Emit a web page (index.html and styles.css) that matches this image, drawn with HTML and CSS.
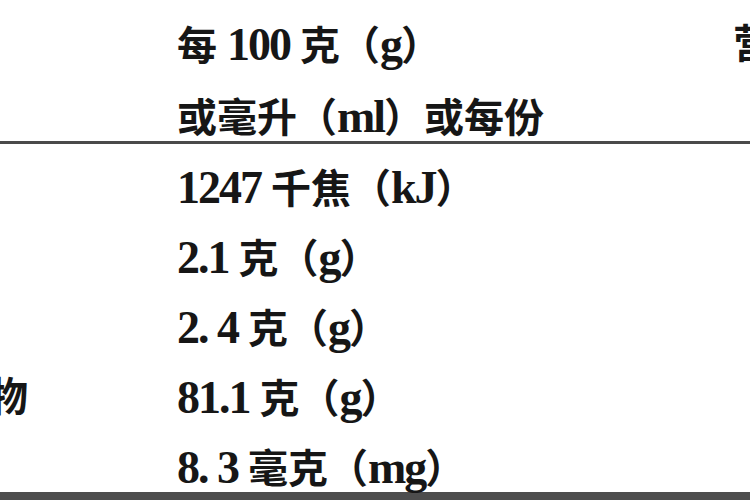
FILE: index.html
```html
<!DOCTYPE html>
<html lang="zh-CN">
<head>
<meta charset="utf-8">
<title>营养成分表</title>
<link rel="stylesheet" href="styles.css">
</head>
<body>
<div class="tbl">
  <div class="row head">
    <div class="cell"><div class="ln">项目</div><div class="ln"></div></div>
    <div class="cell"><div class="ln">每 <span class="n">100</span> 克（<span class="n">g</span>）</div><div class="ln">或毫升（<span class="n">ml</span>）或每份</div></div>
    <div class="cell nrv"><div class="ln">营养素参考值%</div><div class="ln"></div></div>
  </div>
  <div class="body">
    <div class="row"><div class="cell">能量</div><div class="cell"><span class="n">1247</span> 千焦（<span class="n">kJ</span>）</div><div class="cell nrv"><span class="v">15%</span></div></div>
    <div class="row"><div class="cell">蛋白质</div><div class="cell"><span class="n">2.1</span> 克（<span class="n">g</span>）</div><div class="cell nrv"><span class="v">4%</span></div></div>
    <div class="row"><div class="cell">脂肪</div><div class="cell"><span class="n">2. 4</span> 克（<span class="n">g</span>）</div><div class="cell nrv"><span class="v">4%</span></div></div>
    <div class="row"><div class="cell">碳水化合物</div><div class="cell"><span class="n">81.1</span> 克（<span class="n">g</span>）</div><div class="cell nrv"><span class="v">27%</span></div></div>
    <div class="row"><div class="cell">钠</div><div class="cell"><span class="n">8. 3</span> 毫克（<span class="n">mg</span>）</div><div class="cell nrv"><span class="v">0%</span></div></div>
  </div>
</div>
</body>
</html>
```

FILE: styles.css
```css
html, body {
  margin: 0;
  padding: 0;
  background: #ffffff;
}
body {
  width: 750px;
  height: 500px;
  overflow: hidden;
}
.tbl {
  margin-left: -172px;
  width: 1100px;
  font-family: "Liberation Serif", "Noto Sans CJK SC", serif;
  font-weight: bold;
  font-size: 40px;
  color: #161616;
}
.row {
  display: grid;
  grid-template-columns: 349px 554px 1fr;
  line-height: 48px;
  height: 48px;
  white-space: nowrap;
}
.row.head {
  height: auto;
  padding-top: 21px;
  border-bottom: 3px solid #4a4a4a;
}
.head .cell {
  display: flex;
  flex-direction: column;
  gap: 24px;
}
.ln {
  height: 48px;
}
.n {
  font-size: 46px;
  letter-spacing: -2px;
}
.body {
  padding-top: 20px;
  display: flex;
  flex-direction: column;
  gap: 22px;
  border-bottom: 8px solid #4d4d4d;
}
.nrv {
  padding-left: 2px;
}
.nrv .v {
  padding-left: 19px;
}
```
